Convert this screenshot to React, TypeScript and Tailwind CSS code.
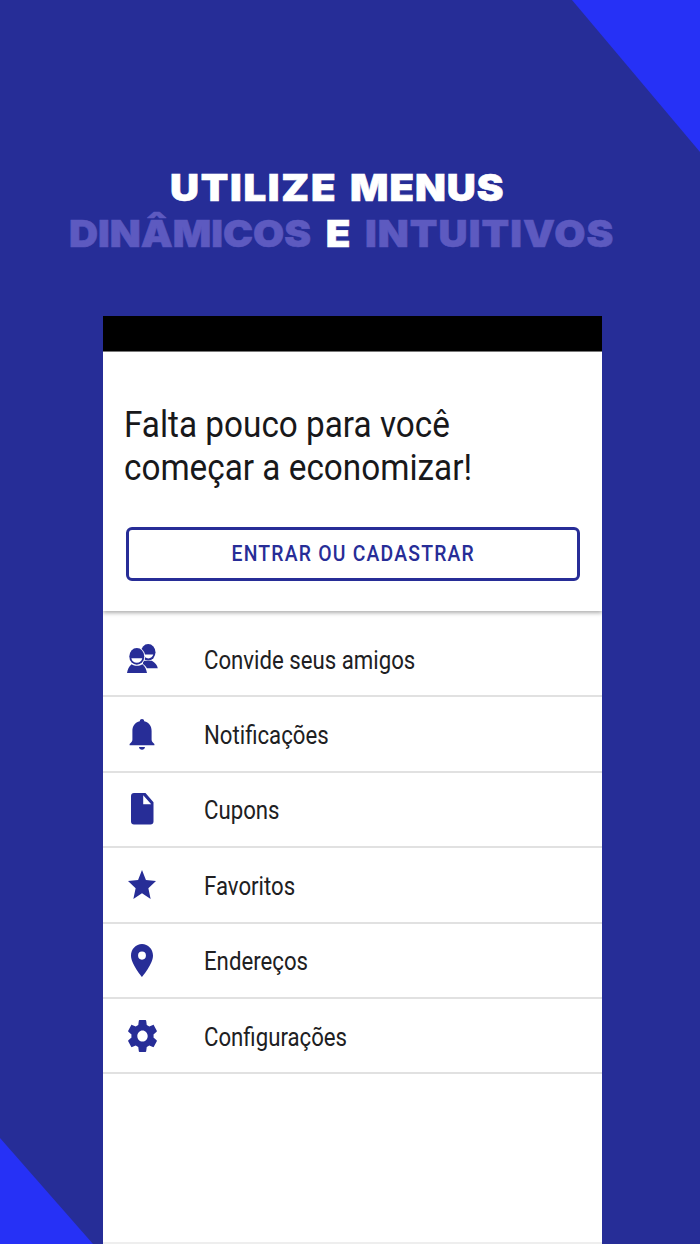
import React from 'react'

const PeopleIcon = () => (
  <svg width="31" height="30" viewBox="0 0 31 30" fill="#272d97">
    <path d="M16 24.3H30.8C30.2 21.2 28 18.4 24.8 16.8H16Z" />
    <ellipse cx="21.2" cy="8.3" rx="7.3" ry="8.3" />
    <path d="M17 10.6H26.3C25.7 13 23.8 14.4 21.3 14.4C19 14.4 17.4 13.2 17 10.6Z" fill="#fff" />
    <ellipse cx="9.8" cy="12.5" rx="8.4" ry="9.2" fill="#fff" />
    <path d="M11 19.2H14.5C18.2 20.8 20.5 23.5 21.2 29.5H11Z" fill="#fff" />
    <path d="M0 29C.6 25.4 2 22 4.6 20.2C8 22.2 12 22.2 15.4 20.2C18 22 19.4 25.4 20 29Z" />
    <ellipse cx="9.8" cy="12.4" rx="7.5" ry="8.4" />
    <path d="M4.3 14.2H15.3C14.7 17 12.7 18.7 9.8 18.7C6.9 18.7 4.9 17 4.3 14.2Z" fill="#fff" />
  </svg>
)

const BellIcon = () => (
  <svg width="26" height="31" viewBox="0 0 26 31" fill="#272d97">
    <path d="M13 0C14.3 0 15.1 .9 15.2 2.3C20 3.4 22.6 7 22.6 12V20.5C22.6 22.3 23.4 23.2 25.4 25V26.3H.6V25C2.6 23.2 3.4 22.3 3.4 20.5V12C3.4 7 6 3.4 10.8 2.3C10.9 .9 11.7 0 13 0Z" />
    <path d="M10 28H16C15.7 29.8 14.7 30.7 13 30.7C11.3 30.7 10.3 29.8 10 28Z" />
  </svg>
)

const FileIcon = () => (
  <svg width="23" height="32" viewBox="0 0 23 32" fill="#272d97">
    <path d="M3 0H14.5L22.5 9.3V28.5C22.5 30.3 21.3 31.5 19.5 31.5H3C1.2 31.5 0 30.3 0 28.5V3C0 1.2 1.2 0 3 0ZM12.2 2.2V11.2H20.2Z" fillRule="evenodd" />
  </svg>
)

const StarIcon = () => (
  <svg width="28" height="29" viewBox="2 2 20 19" preserveAspectRatio="none" fill="#272d97">
    <path d="M12 17.27 18.18 21l-1.64-7.03L22 9.24l-7.19-.61L12 2 9.19 8.63 2 9.24l5.46 4.73L5.82 21z" />
  </svg>
)

const PinIcon = () => (
  <svg width="22" height="33" viewBox="5 2 14 20" preserveAspectRatio="none" fill="#272d97">
    <path d="M12 2C8.13 2 5 5.13 5 9c0 5.25 7 13 7 13s7-7.75 7-13c0-3.87-3.13-7-7-7zm0 9.5a2.5 2.5 0 0 1 0-5 2.5 2.5 0 0 1 0 5z" />
  </svg>
)

const GearIcon = () => (
  <svg width="29" height="32" viewBox="2.2 2 19.6 20" preserveAspectRatio="none" fill="#272d97">
    <path d="M19.43 12.98c.04-.32.07-.64.07-.98s-.03-.66-.07-.98l2.11-1.65c.19-.15.24-.42.12-.64l-2-3.46c-.12-.22-.39-.3-.61-.22l-2.49 1c-.52-.4-1.08-.73-1.69-.98l-.38-2.65C14.46 2.18 14.25 2 14 2h-4c-.25 0-.46.18-.49.42l-.38 2.65c-.61.25-1.17.59-1.69.98l-2.49-1c-.23-.09-.49 0-.61.22l-2 3.46c-.13.22-.07.49.12.64l2.11 1.65c-.04.32-.07.65-.07.98s.03.66.07.98l-2.11 1.65c-.19.15-.24.42-.12.64l2 3.46c.12.22.39.3.61.22l2.49-1c.52.4 1.08.73 1.69.98l.38 2.65c.03.24.24.42.49.42h4c.25 0 .46-.18.49-.42l.38-2.65c.61-.25 1.17-.59 1.69-.98l2.49 1c.23.09.49 0 .61-.22l2-3.46c.12-.22.07-.49-.12-.64l-2.11-1.65zM12 15.5c-1.93 0-3.5-1.57-3.5-3.5s1.57-3.5 3.5-3.5 3.5 1.57 3.5 3.5-1.57 3.5-3.5 3.5z" />
  </svg>
)

const menuItems = [
  { label: 'Convide seus amigos', icon: <PeopleIcon /> },
  { label: 'Notificações', icon: <BellIcon /> },
  { label: 'Cupons', icon: <FileIcon /> },
  { label: 'Favoritos', icon: <StarIcon /> },
  { label: 'Endereços', icon: <PinIcon /> },
  { label: 'Configurações', icon: <GearIcon /> },
]

export default function App() {
  return (
    <main className="relative h-[1244px] w-[700px] overflow-hidden bg-[#262d97] font-['Roboto',sans-serif]">
      <svg className="absolute inset-0" width="700" height="1244" fill="#2631f6">
        <path d="M572 0H700V152Z" />
        <path d="M0 1138L93 1244H0Z" />
      </svg>

      <div className="relative flex h-full flex-col">
        <h1 className="flex h-[316px] flex-col pt-[165px] font-['Inter',sans-serif] text-[37px] leading-[46px] font-black whitespace-nowrap text-white">
          <span className="ml-[170px] w-max origin-left scale-x-[1.085] [-webkit-text-stroke:0.6px_#fff] [word-spacing:4.5px]">
            <span className="tracking-[1.6px]">UTILIZE</span> <span className="tracking-[0.85px]">MENUS</span>
          </span>
          <span className="ml-[69px] w-max origin-left scale-x-[1.088] [word-spacing:6px]">
            <span className="text-[#5d5ac0] [-webkit-text-stroke:0.6px_#5d5ac0]">DINÂMICOS</span>{' '}
            <span className="[-webkit-text-stroke:0.6px_#fff]">E</span>{' '}
            <span className="tracking-[1px] text-[#5d5ac0] [-webkit-text-stroke:0.6px_#5d5ac0]">INTUITIVOS</span>
          </span>
        </h1>

        <section className="ml-[103px] flex w-[499px] grow flex-col border-b-2 border-[#eeeeee] bg-white">
          <div className="h-[35px] shrink-0 bg-black" />
          <div className="flex h-[260px] shrink-0 flex-col border-t border-[#777777] px-[21px] pt-[51px] shadow-[0_2px_4px_rgba(0,0,0,0.32)] [clip-path:inset(0_0_-8px_0)]">
            <h2 className="-ml-[0.5px] w-max origin-left scale-x-[0.9] text-[37px] leading-[43px] text-[#18181a]">
              Falta pouco para você<br />começar a economizar!
            </h2>
            <button className="mt-[38px] ml-[2px] flex h-[54px] w-[454px] items-center justify-center rounded-[6px] border-[3px] border-[#272d97] text-[#272d97]">
              <span className="scale-x-[0.9] text-[21.5px] font-medium tracking-[1.35px] whitespace-nowrap">ENTRAR OU CADASTRAR</span>
            </button>
          </div>

          <ul className="pt-[11px]">
            {menuItems.map((item) => (
              <li key={item.label} className="flex h-[75.4px] items-center border-b-2 border-[#e1e1e1]">
                <span className="flex w-[78px] shrink-0 justify-center">{item.icon}</span>
                <span className="ml-[23px] origin-left scale-x-[0.888] pt-[3px] text-[25px] leading-none whitespace-nowrap text-[#202022]">{item.label}</span>
              </li>
            ))}
          </ul>
        </section>
      </div>
    </main>
  )
}
